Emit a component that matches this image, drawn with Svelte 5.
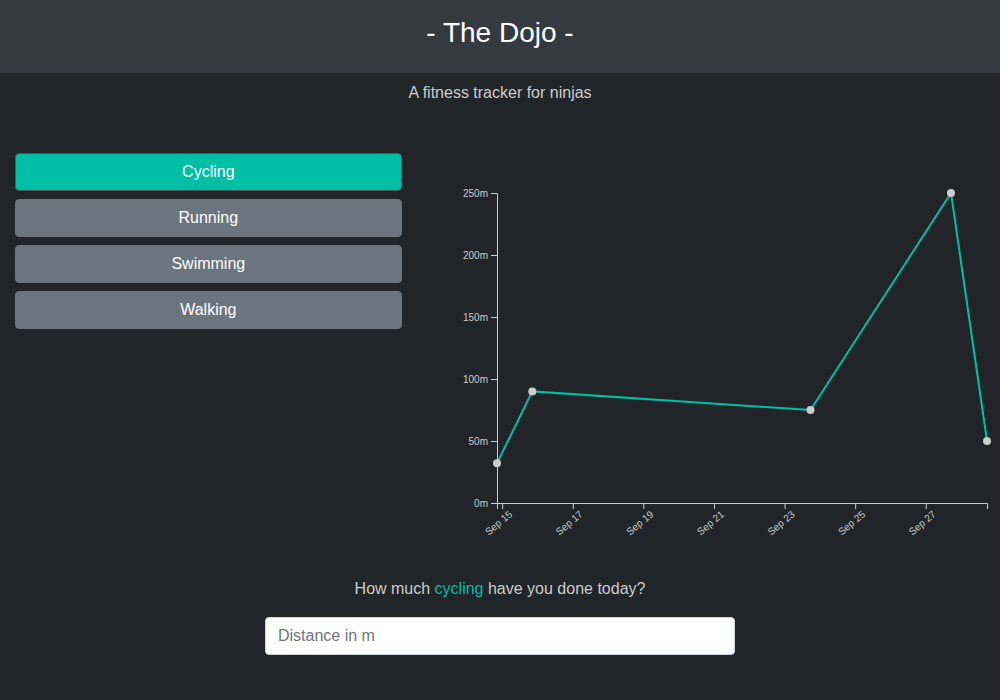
<script>
  const activities = ['cycling', 'running', 'swimming', 'walking'];
  const capitalise = (word) => word[0].toUpperCase() + word.slice(1);

  const entries = {
    cycling: [
      { day: 14.84, distance: 32 },
      { day: 15.84, distance: 90 },
      { day: 23.72, distance: 75 },
      { day: 27.7, distance: 250 },
      { day: 28.72, distance: 50 }
    ],
    running: [],
    swimming: [],
    walking: []
  };

  let activity = $state('cycling');
  let distance = $state('');
  let chartWidth = $state(568);

  const margin = { left: 65, right: 13, top: 40 };
  const plotHeight = 310;
  const firstDay = 14.84;
  const lastDay = 28.72;
  const dayTicks = [15, 17, 19, 21, 23, 25, 27];
  const distanceTicks = [0, 50, 100, 150, 200, 250];

  let plotWidth = $derived(Math.max(chartWidth - margin.left - margin.right, 0));
  let points = $derived(entries[activity]);
  let path = $derived(points.map((p) => `${x(p.day)},${y(p.distance)}`).join(' '));

  function x(day) {
    return ((day - firstDay) / (lastDay - firstDay)) * plotWidth;
  }
  function y(value) {
    return plotHeight - (value / 250) * plotHeight;
  }
</script>

<header>
  <h1>- The Dojo -</h1>
</header>
<p class="tagline">A fitness tracker for ninjas</p>

<main>
  <div class="columns">
    <div class="activities">
      {#each activities as name}
        <button type="button" class:active={activity === name} onclick={() => (activity = name)}>
          {capitalise(name)}
        </button>
      {/each}
    </div>

    <div class="chart" bind:clientWidth={chartWidth}>
      <svg width={chartWidth} height="400" role="img" aria-label="Distance by day">
        <g transform="translate({margin.left},{margin.top})">
          <polyline class="line" points={path} />
          {#each points as p}
            <circle cx={x(p.day)} cy={y(p.distance)} r="4" />
          {/each}

          <g transform="translate(0,{plotHeight})">
            <path class="axis" d="M0.5,6V0.5H{plotWidth + 0.5}V6" />
            {#each dayTicks as day}
              <g transform="translate({x(day)},0)">
                <line class="axis" y2="6" />
                <text class="day" y="9" dy="0.71em" transform="rotate(-40)">Sep {day}</text>
              </g>
            {/each}
          </g>

          <path class="axis" d="M-6,{plotHeight + 0.5}H0.5V0.5H-6" />
          {#each distanceTicks as value}
            <g transform="translate(0,{y(value) + 0.5})">
              <line class="axis" x2="-6" />
              <text x="-9" dy="0.32em">{value}m</text>
            </g>
          {/each}
        </g>
      </svg>
    </div>
  </div>

  <form onsubmit={(event) => event.preventDefault()}>
    <label for="distance">How much <span>{activity}</span> have you done today?</label>
    <input id="distance" type="text" placeholder="Distance in m" bind:value={distance} />
  </form>
</main>

<style>
  :global(body) {
    background: #212529;
    color: #ccc;
    font: 16px/24px "Liberation Sans", Arial, sans-serif;
  }

  header {
    padding: 16px 16px 23px;
    background: #343a40;
    text-align: center;
  }

  h1 {
    margin: 0;
    color: #fff;
    font-size: 28px;
    font-weight: 400;
    line-height: 34px;
  }

  .tagline {
    margin: 8px 0 48px;
    text-align: center;
  }

  .columns {
    display: grid;
    grid-template-columns: 5fr 7fr;
  }

  .activities {
    display: flex;
    flex-direction: column;
    gap: 8px;
    padding: 0 15px;
  }

  button {
    padding: 6px 12px;
    border: 1px solid #6c757d;
    border-radius: 4px;
    background: #6c757d;
    color: #fff;
    font: inherit;
    cursor: pointer;
  }

  button.active {
    border-color: #4e555b;
    background: #00bfa5;
  }

  .chart {
    min-width: 0;
    margin-left: 15px;
  }

  svg {
    display: block;
  }

  .line {
    fill: none;
    stroke: #00bfa5;
    stroke-width: 2;
  }

  circle {
    fill: #ccc;
  }

  .axis {
    fill: none;
    stroke: #ccc;
  }

  text {
    fill: #ccc;
    font-size: 10px;
    text-anchor: end;
  }

  form {
    box-sizing: border-box;
    width: 50%;
    margin: 24px auto;
    padding: 0 15px;
    text-align: center;
  }

  label {
    display: block;
    margin-bottom: 16px;
  }

  label span {
    color: #00bfa5;
  }

  input {
    box-sizing: border-box;
    display: block;
    width: 100%;
    padding: 6px 12px;
    border: 1px solid #ced4da;
    border-radius: 4px;
    background: #fff;
    color: #495057;
    font: inherit;
  }

  input::placeholder {
    color: #6c757d;
    opacity: 1;
  }
</style>
